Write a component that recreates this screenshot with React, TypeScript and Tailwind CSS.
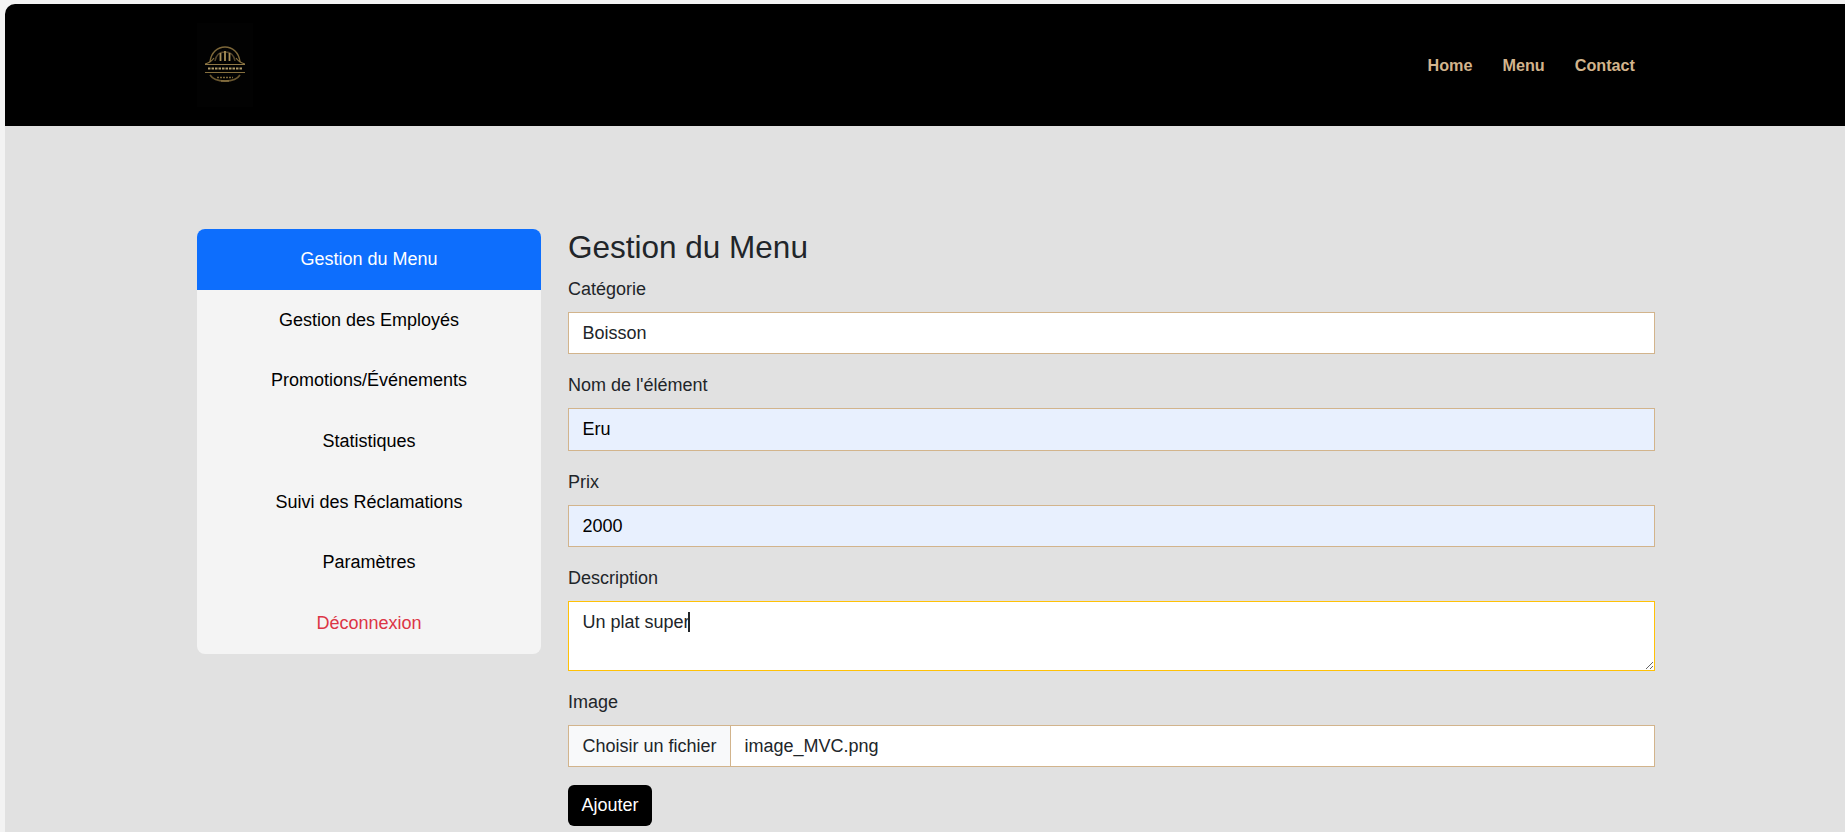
const sideItems = [
  "Gestion des Employés",
  "Promotions/Événements",
  "Statistiques",
  "Suivi des Réclamations",
  "Paramètres",
];

function Logo() {
  return (
    <svg width="56" height="84" viewBox="0 0 56 84" fill="none" className="bg-[#020202]">
      <path d="M13 39C14 29 21 24 28 24C35 24 42 29 43 39" stroke="#7d6739" strokeWidth="1.5" />
      <path d="M18 38C19 32 23 29 28 29C33 29 37 32 38 38" stroke="#54442a" strokeWidth="1.5" />
      <path d="M23.5 30v8M28 28v10M32.5 30v8" stroke="#a98f58" strokeWidth="1.8" />
      <path d="M8 41C12 40 15 38 17 35M48 41C44 40 41 38 39 35" stroke="#86703f" strokeWidth="1.2" />
      <path d="M8 41.5h40" stroke="#8f7746" />
      <path d="M11 45.5h34" stroke="#b09a68" strokeWidth="2.2" strokeDasharray="2.5 1" />
      <path d="M8 49.5h40" stroke="#86703f" />
      <path d="M13 52C18 60 38 60 43 52" stroke="#6a5730" strokeWidth="1.6" />
      <path d="M20 54.5h16" stroke="#7d6739" strokeWidth="1.6" strokeDasharray="2 1" />
      <path d="M24 58h8" stroke="#8f7746" strokeWidth="1.4" />
    </svg>
  );
}

function Field({ label, value, autofill }: { label: string; value: string; autofill?: boolean }) {
  return (
    <div className="mb-[18px]">
      <label className="block mb-[9px] leading-[27px]">{label}</label>
      <input
        readOnly
        value={value}
        className={`block w-full px-[13.5px] py-[6.75px] leading-[27px] border border-[#d2b48c] outline-none ${
          autofill ? "bg-[#e8f0fe] text-black" : "bg-white text-[#212529]"
        }`}
      />
    </div>
  );
}

export default function App() {
  return (
    <div className="h-[832px] overflow-hidden flex flex-col pl-[5px] pt-[4px] bg-[#f3f3f3] font-['Liberation_Sans',Arial,sans-serif] text-[18px] text-[#212529]">
      <header className="h-[122px] shrink-0 bg-black rounded-tl-[10px] flex items-center justify-between pl-[192px] pr-[210px]">
        <Logo />
        <nav className="flex gap-[30px] font-bold text-[16.2px] text-[#d2b48c]">
          <a>Home</a>
          <a>Menu</a>
          <a>Contact</a>
        </nav>
      </header>
      <main className="flex-1 flex gap-[27px] pl-[192px] pr-[190px] pt-[103px] bg-[#e1e1e1]">
        <aside className="w-[344px] h-[425px] shrink-0 bg-[#f4f4f4] rounded-[8px] overflow-hidden flex flex-col text-center">
          <a className="flex-1 flex items-center justify-center bg-[#0d6efd] text-white">Gestion du Menu</a>
          {sideItems.map((item) => (
            <a key={item} className="flex-1 flex items-center justify-center text-black">
              {item}
            </a>
          ))}
          <a className="flex-1 flex items-center justify-center text-[#dc3545]">Déconnexion</a>
        </aside>
        <section className="flex-1">
          <h2 className="text-[31.5px] leading-[37.8px] mb-[9px]">Gestion du Menu</h2>
          <Field label="Catégorie" value="Boisson" />
          <Field label="Nom de l'élément" value="Eru" autofill />
          <Field label="Prix" value="2000" autofill />
          <div className="mb-[18px]">
            <label className="block mb-[9px] leading-[27px]">Description</label>
            <div className="relative">
              <textarea
                readOnly
                rows={2}
                value="Un plat super"
                className="block w-full h-[69.5px] px-[13.5px] py-[6.75px] leading-[27px] bg-white border border-[#ffc107] outline-none"
              />
              <span className="absolute left-[120px] top-[11px] h-[20px] w-[2px] bg-[#212529]" />
            </div>
          </div>
          <div className="mb-[18px]">
            <label className="block mb-[9px] leading-[27px]">Image</label>
            <div className="flex items-stretch h-[42.5px] bg-white border border-[#d2b48c]">
              <span className="flex items-center px-[13.5px] bg-[#f8f9fa] border-r border-[#d2b48c]">Choisir un fichier</span>
              <span className="flex items-center px-[13.5px]">image_MVC.png</span>
            </div>
          </div>
          <button className="w-[84px] h-[41px] rounded-[6px] bg-black text-white">Ajouter</button>
        </section>
      </main>
    </div>
  );
}
